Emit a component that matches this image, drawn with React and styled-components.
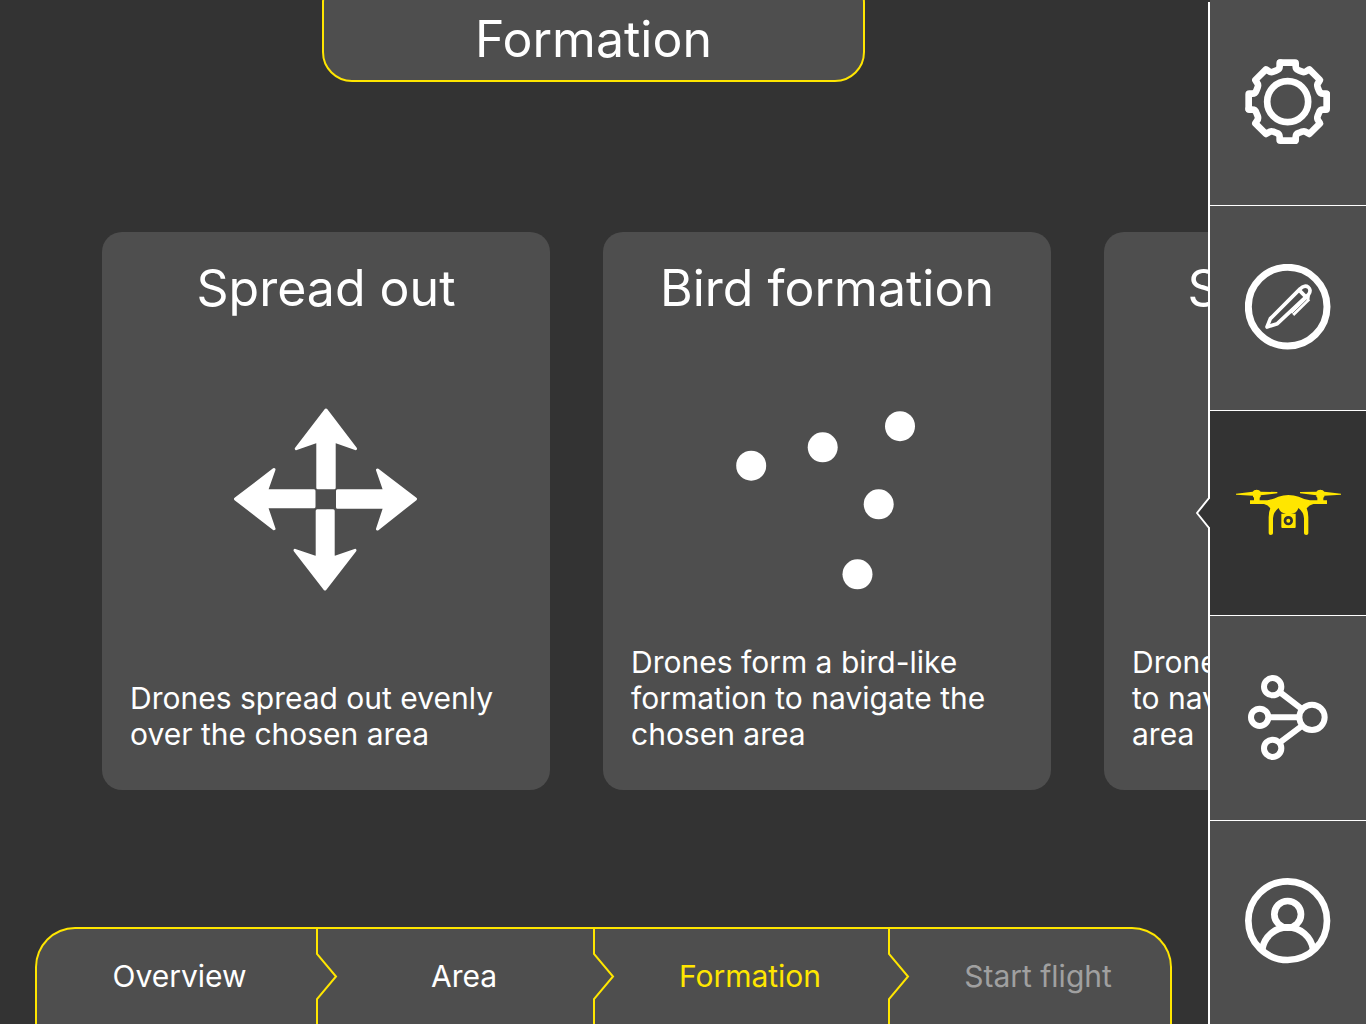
import { useState } from 'react'
import { styled, createGlobalStyle, ThemeProvider } from 'styled-components'

const theme = {
  dark: '#333333',
  panel: '#4e4e4e',
  accent: '#ffe600',
  text: '#ffffff',
  muted: '#a0a0a0',
}

const GlobalStyle = createGlobalStyle`
  * {
    box-sizing: border-box;
  }

  body {
    margin: 0;
    background: #333333;
    color: #ffffff;
    font-family: Inter, 'Liberation Sans', sans-serif;
    font-weight: 400;
  }

  button {
    margin: 0;
    padding: 0;
    border: 0;
    color: inherit;
    font: inherit;
    cursor: pointer;
  }
`

const Page = styled.div`
  display: flex;
  height: 100vh;
  overflow: hidden;
`

const Main = styled.main`
  flex: 1;
  min-width: 0;
  display: flex;
  flex-direction: column;
`

const Header = styled.header`
  display: flex;
  justify-content: center;
`

const Title = styled.h1`
  width: 45%;
  margin: -27px 21px 0 0;
  padding: 34px 0 11px;
  border: 2px solid ${({ theme }) => theme.accent};
  border-radius: 30px;
  background: ${({ theme }) => theme.panel};
  font-size: 50px;
  font-weight: inherit;
  line-height: 60px;
  text-align: center;
`

const CardRail = styled.section`
  flex: 1;
  display: flex;
  align-items: center;
  gap: 53px;
  padding: 13px 0 0 102px;
  overflow-x: auto;
  scrollbar-width: none;
`

const CardButton = styled.button`
  flex: 0 0 448px;
  min-height: 558px;
  display: flex;
  flex-direction: column;
  padding: 26px 28px 38px;
  border-radius: 20px;
  background: ${({ theme }) => theme.panel};
`

const CardTitle = styled.span`
  align-self: center;
  font-size: 50px;
  line-height: 60px;
  white-space: nowrap;
`

const CardArt = styled.svg`
  align-self: center;
  width: 184px;
  height: 184px;
  margin: 90px 0 40px;
  fill: ${({ theme }) => theme.text};
`

const CardText = styled.span`
  margin-top: auto;
  font-size: 30px;
  line-height: 36px;
  text-align: left;
`

const Steps = styled.nav`
  display: grid;
  grid-template-columns: 280fr 277fr 295fr 281fr;
  height: 97px;
  margin: 0 36px 0 35px;
  border: 2px solid ${({ theme }) => theme.accent};
  border-bottom: 0;
  border-radius: 40px 40px 0 0;
  background: ${({ theme }) => theme.panel};
`

const Step = styled.button`
  position: relative;
  padding: 0 0 2px 17px;
  background: none;
  font-size: 30px;
  line-height: 36px;

  &:first-child {
    padding-left: 5px;
  }

  &:disabled {
    color: ${({ theme }) => theme.muted};
    cursor: default;
  }

  &[aria-current='step'] {
    color: ${({ theme }) => theme.accent};
  }
`

const StepDivider = styled.svg`
  position: absolute;
  z-index: 1;
  top: 0;
  right: -21px;
  width: 22px;
  height: 95px;
  fill: none;
  stroke: ${({ theme }) => theme.accent};
  stroke-width: 2;
`

const Sidebar = styled.nav`
  position: relative;
  flex: 0 0 158px;
  display: grid;
  grid-template-rows: repeat(4, round(up, 20vh, 1px)) 1fr;
  padding-left: 2px;

  &::before {
    content: '';
    position: absolute;
    top: 2px;
    bottom: 0;
    left: 0;
    width: 2px;
    background: ${({ theme }) => theme.text};
  }
`

const SideButton = styled.button`
  position: relative;
  display: flex;
  align-items: center;
  justify-content: center;
  padding-bottom: 2px;
  background: ${({ theme, $active }) => ($active ? theme.dark : theme.panel)};
  color: ${({ theme, $active }) => ($active ? theme.accent : theme.text)};

  & + & {
    border-top: 1px solid ${({ theme }) => theme.text};
  }

  &:last-child {
    padding-bottom: 4px;
  }
`

const SideIcon = styled.svg`
  width: 86px;
  height: 86px;
  fill: none;
  stroke: currentColor;
  stroke-width: 20;
  stroke-linejoin: round;
`

const DroneSvg = styled.svg`
  width: 106px;
  height: 47px;
  fill: currentColor;
`

const ActivePointer = styled.svg`
  position: absolute;
  top: 50%;
  left: -14px;
  width: 14px;
  height: 32px;
  margin-top: -16px;
  fill: ${({ theme }) => theme.dark};
`

const GEAR_QUARTER =
  'M-22 -117H22Q24 -117 24 -115V-106Q24 -97 33 -94L43 -90Q51 -87 57 -92L65 -97L97 -65L92 -57Q87 -51 90 -43L94 -33Q97 -24 106 -24H115Q117 -24 117 -22'

function GearIcon() {
  return (
    <SideIcon viewBox='-128 -128 258 258' aria-hidden='true'>
      {[0, 90, 180, 270].map(angle => (
        <path key={angle} d={GEAR_QUARTER} transform={`rotate(${angle})`} strokeLinecap='round' />
      ))}
      <circle r='61.5' />
    </SideIcon>
  )
}

function PenIcon() {
  return (
    <SideIcon viewBox='-128 -128 258 258' aria-hidden='true'>
      <circle r='118' strokeWidth='21' />
      <g strokeWidth='11'>
        <path d='M-62 61L-52 36L38 -54C55 -72 76 -54 63 -37L-31 51Z' />
        <path d='M36 -48L53 -31' />
        <path d='M62 -25L14 22' strokeWidth='16' strokeLinejoin='miter' />
        <path d='M50 -29L66 -27' />
      </g>
      <path d='M57 -21L14 21' stroke='#4e4e4e' strokeWidth='2' />
    </SideIcon>
  )
}

function DroneIcon() {
  return (
    <DroneSvg viewBox='135 117 318 141' aria-hidden='true'>
      <path d='M138 131L188 125Q191 119 200 119Q209 119 212 125L262 126V130L212 136V140L209 143V151H232Q250 147 265 140Q280 135 295 135Q312 135 326 140Q342 148 360 151H382V143L379 140V136L330 130V126L379 125Q382 119 391 119Q400 119 403 125L453 131V134L403 137V140L400 143V151H411V162H370Q358 165 350 175Q355 186 355 202V250Q355 255 349 255Q342 255 342 250V205Q341 186 325 174Q321 191 303 191H317V231Q317 234 314 234H277Q274 234 274 231V191H288Q270 189 266 174Q250 186 249 205V250Q249 255 242 255Q236 255 236 250V202Q236 186 241 175Q234 165 222 162H180V151H192V143L189 140V137L138 134Z' />
      <circle cx='295' cy='212' r='10' fill='none' stroke='#333333' strokeWidth='8' />
    </DroneSvg>
  )
}

function NetworkIcon() {
  return (
    <SideIcon viewBox='-128 -131 258 258' aria-hidden='true'>
      <g strokeWidth='18'>
        <circle cx='-45' cy='-93' r='26' />
        <circle cx='-84' cy='-1' r='26' />
        <circle cx='-45' cy='92' r='26' />
        <circle cx='73' cy='-1' r='38' />
        <path d='M-20 -74L44 -25M-58 -1H35M-20 72L44 24' />
      </g>
    </SideIcon>
  )
}

function UserIcon() {
  return (
    <SideIcon viewBox='-128 -128 258 258' aria-hidden='true'>
      <circle r='118' />
      <circle cy='-19' r='40' />
      <path d='M-76 85A77 77 0 0 1 76 85' />
    </SideIcon>
  )
}

function SpreadArt() {
  return (
    <CardArt viewBox='0 0 184 184' stroke='#ffffff' strokeWidth='3' strokeLinejoin='round' aria-hidden='true'>
      <path d='M92 2L62.3 40.7L83.8 33.2V79.8H100.2V33.2L121.5 40.7Z' />
      <path d='M181.5 91L143.5 62L150.7 82.8H103.5V99.2H150.7L143.5 121Z' />
      <path d='M1.5 91L40 61.5L32.5 82.8H80V98.8H32.5L40 120.7Z' />
      <path d='M91 181L61 142.3L83.2 150V102.8H99.2V150L121 142.3Z' />
    </CardArt>
  )
}

function DotsArt({ dots }) {
  return (
    <CardArt viewBox='0 0 184 184' aria-hidden='true'>
      {dots.map(([x, y]) => (
        <circle key={x} cx={x} cy={y} r='15' />
      ))}
    </CardArt>
  )
}

const birdDots = [
  [16.2, 57.7],
  [87.7, 39.3],
  [165, 18.2],
  [143.7, 96.3],
  [122.5, 166.3],
]

const lineDots = [
  [16, 92],
  [54, 92],
  [92, 92],
  [130, 92],
  [168, 92],
]

const formations = [
  {
    title: 'Spread out',
    text: 'Drones spread out evenly over the chosen area',
    art: <SpreadArt />,
  },
  {
    title: 'Bird formation',
    text: 'Drones form a bird-like formation to navigate the chosen area',
    art: <DotsArt dots={birdDots} />,
  },
  {
    title: 'Straight line',
    text: 'Drones form a straight line to navigate the chosen area',
    art: <DotsArt dots={lineDots} />,
  },
]

const steps = ['Overview', 'Area', 'Formation', 'Start flight']

const sections = [
  { key: 'settings', label: 'Settings', Icon: GearIcon },
  { key: 'draw', label: 'Draw', Icon: PenIcon },
  { key: 'drones', label: 'Drones', Icon: DroneIcon },
  { key: 'network', label: 'Network', Icon: NetworkIcon },
  { key: 'account', label: 'Account', Icon: UserIcon },
]

const App = () => {
  const [step, setStep] = useState('Formation')
  const [section, setSection] = useState('drones')

  return (
    <ThemeProvider theme={theme}>
      <GlobalStyle />
      <Page>
        <Main>
          <Header>
            <Title>Formation</Title>
          </Header>

          <CardRail>
            {formations.map(({ title, text, art }) => (
              <CardButton key={title} type='button'>
                <CardTitle>{title}</CardTitle>
                {art}
                <CardText>{text}</CardText>
              </CardButton>
            ))}
          </CardRail>

          <Steps aria-label='Flight steps'>
            {steps.map((name, i) => (
              <Step
                key={name}
                type='button'
                disabled={name === 'Start flight'}
                aria-current={name === step ? 'step' : undefined}
                onClick={() => setStep(name)}
              >
                {name}
                {i < steps.length - 1 && (
                  <StepDivider viewBox='0 0 22 95' aria-hidden='true'>
                    <path d='M1 0V25L20 47.5L1 70V95' />
                  </StepDivider>
                )}
              </Step>
            ))}
          </Steps>
        </Main>

        <Sidebar aria-label='Sections'>
          {sections.map(({ key, label, Icon }) => (
            <SideButton
              key={key}
              type='button'
              aria-label={label}
              $active={key === section}
              onClick={() => setSection(key)}
            >
              {key === section && (
                <ActivePointer viewBox='0 0 14 32' aria-hidden='true'>
                  <path d='M14 1L1 16L14 31Z' />
                  <path d='M13 0V1L1 16L13 31V32' fill='none' stroke='#ffffff' strokeWidth='2' />
                </ActivePointer>
              )}
              <Icon />
            </SideButton>
          ))}
        </Sidebar>
      </Page>
    </ThemeProvider>
  )
}

export default App
